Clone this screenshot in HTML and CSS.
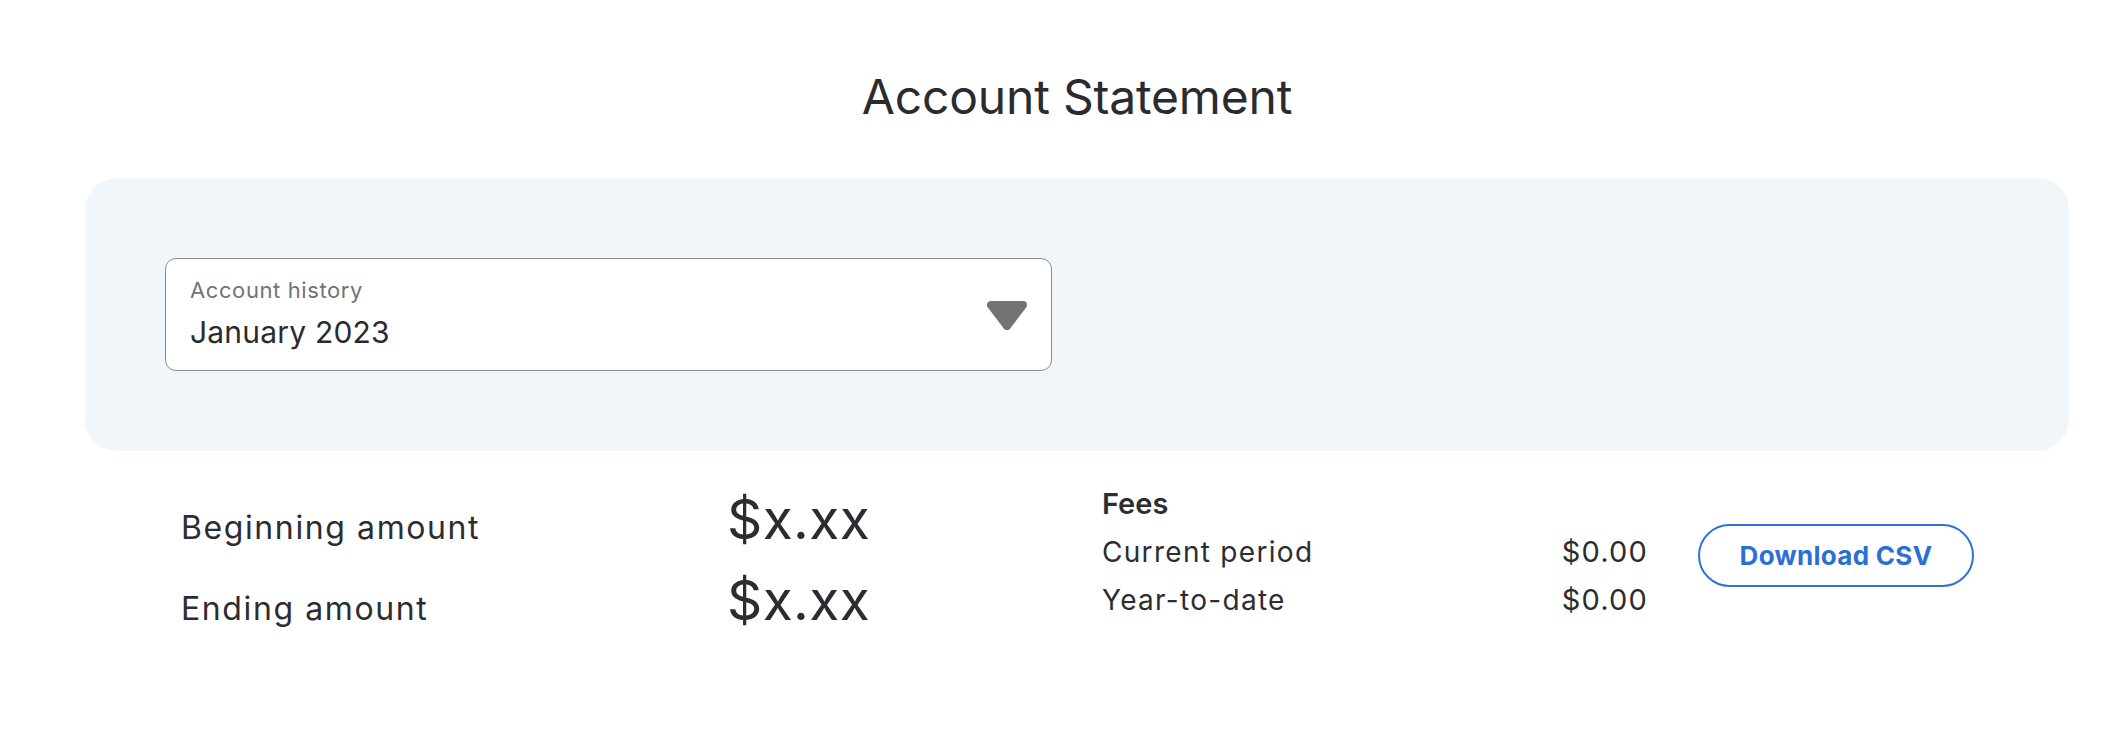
FILE: index.html
```html
<!DOCTYPE html>
<html lang="en">
<head>
<meta charset="utf-8">
<title>Account Statement</title>
<link rel="stylesheet" href="styles.css">
</head>
<body>
<main class="page">
  <h1 class="title">Account Statement</h1>
  <section class="panel">
    <div class="select">
      <div class="select-text">
        <span class="select-label">Account history</span>
        <span class="select-value">January 2023</span>
      </div>
      <svg class="select-arrow" width="40" height="29" viewBox="0 0 40 29" aria-hidden="true">
        <polygon points="4,4 36,4 20,25" fill="#737373" stroke="#737373" stroke-width="8" stroke-linejoin="round"/>
      </svg>
    </div>
  </section>
  <section class="summary">
    <div class="balances">
      <span class="bal-label">Beginning amount</span>
      <span class="bal-amount">$x.xx</span>
      <span class="bal-label">Ending amount</span>
      <span class="bal-amount">$x.xx</span>
    </div>
    <div class="fees">
      <span class="fees-title">Fees</span>
      <span class="fees-spacer"></span>
      <span class="fee-label">Current period</span>
      <span class="fee-value">$0.00</span>
      <span class="fee-label">Year-to-date</span>
      <span class="fee-value">$0.00</span>
    </div>
    <button class="csv-btn" type="button">Download CSV</button>
  </section>
</main>
</body>
</html>
```
FILE: styles.css
```css
html, body {
  margin: 0;
  padding: 0;
  background: #ffffff;
}

body {
  font-family: "Inter", "Noto Sans", sans-serif;
  color: #2d2d31;
}

.page {
  padding: 68px 51px 0 85px;
}

.title {
  margin: 0 0 52px 0;
  font-size: 48px;
  line-height: 58px;
  font-weight: 400;
  text-align: center;
  letter-spacing: -0.2px;
  color: #2b2b2f;
}

.panel {
  background: #f1f6fb;
  border-radius: 32px;
  padding: 80px 80px;
}

.select {
  box-sizing: border-box;
  width: 887px;
  height: 113px;
  background: #ffffff;
  border: 1px solid #8c8c92;
  border-radius: 11px;
  display: flex;
  align-items: center;
  padding: 0 24px 0 24px;
}

.select-text {
  flex: 1;
  display: flex;
  flex-direction: column;
  gap: 11px;
  padding-bottom: 3px;
}

.select-label {
  font-size: 22px;
  line-height: 26px;
  letter-spacing: 0.6px;
  color: #737376;
}

.select-value {
  font-size: 30px;
  line-height: 36px;
  letter-spacing: 0.2px;
  color: #2b2b2f;
}

.select-arrow {
  display: block;
  margin-top: 2px;
}

.summary {
  display: flex;
  align-items: flex-start;
  margin-top: 29px;
  padding-left: 96px;
}

.balances {
  width: 921px;
  display: grid;
  grid-template-columns: 546px 1fr;
  grid-auto-rows: 81px;
  align-items: baseline;
}

.bal-label {
  font-size: 32px;
  line-height: 79px;
  letter-spacing: 1.6px;
  color: #2d2d31;
}

.bal-amount {
  font-size: 55px;
  line-height: 79px;
  letter-spacing: 0.4px;
  color: #2d2d31;
}

.fees {
  width: 546px;
  display: grid;
  grid-template-columns: 1fr auto;
  grid-auto-rows: 48px;
  align-items: baseline;
}

.fees-title {
  font-size: 29px;
  line-height: 47px;
  font-weight: 600;
  color: #2d2d31;
}

.fee-label {
  font-size: 28px;
  line-height: 47px;
  letter-spacing: 1.3px;
  color: #2d2d31;
}

.fee-value {
  font-size: 29px;
  line-height: 47px;
  letter-spacing: 1.2px;
  color: #2d2d31;
}

.csv-btn {
  margin: 44px 0 0 50px;
  box-sizing: border-box;
  width: 276px;
  height: 63px;
  border: 2px solid #2f73d8;
  border-radius: 32px;
  background: #ffffff;
  color: #2a6fd6;
  font-family: "Inter", "Noto Sans", sans-serif;
  font-size: 26px;
  font-weight: 700;
  letter-spacing: 0.3px;
  padding: 0;
  cursor: pointer;
}
```
